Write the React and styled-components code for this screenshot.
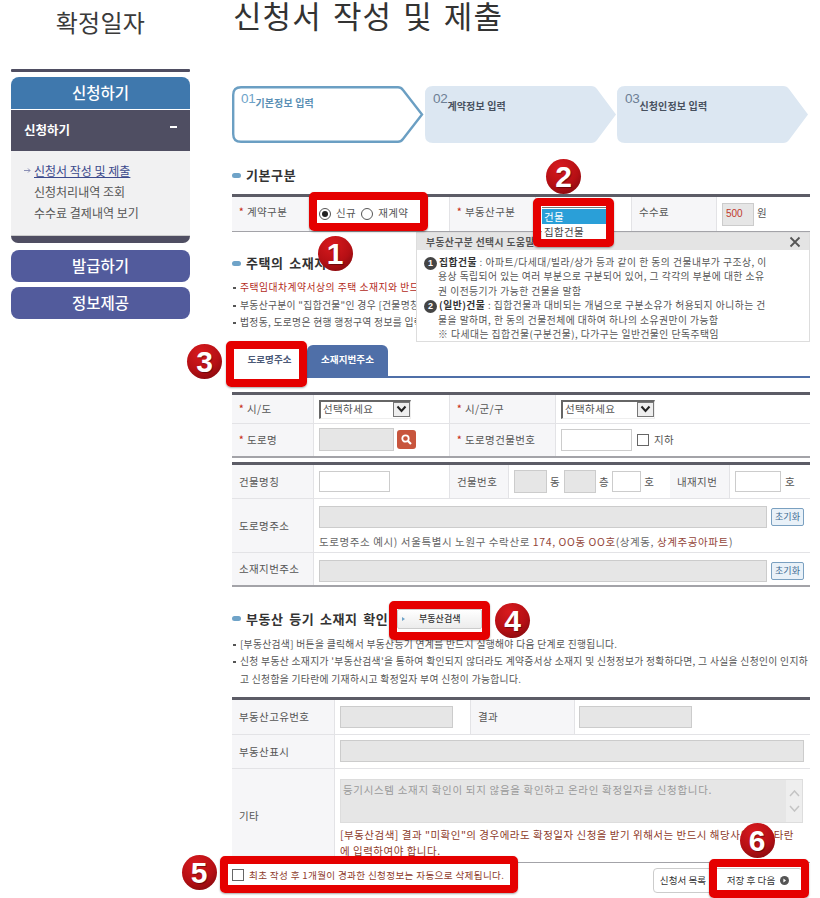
import React from 'react';
import styled, { createGlobalStyle } from 'styled-components';

const Global = createGlobalStyle`
  html, body { margin: 0; padding: 0; background: #fff; }
  body { font-family: "Noto Sans CJK KR", "Liberation Sans", sans-serif; color: #444; overflow: hidden; }
  * { box-sizing: border-box; }
`;

const Page = styled.div`
  position: relative; width: 820px; height: 898px; overflow: hidden; display: flex; background: #fff;
`;
const Side = styled.aside`
  width: 232px; flex: none; padding-left: 11px;
`;
const SideInner = styled.div`width: 179px;`;
const SideTitle = styled.div`
  height: 69px; padding-top: 6px; line-height: 32px; text-align: center; font-size: 24px; color: #3a3a3a; letter-spacing: 0.3px;
`;
const SideRule = styled.div`height: 3px; background: #4f4e62; border-radius: 1px; margin-bottom: 5px;`;
const SideHead = styled.div`
  height: 32px; line-height: 31px; border-radius: ${p => p.$open ? '8px 8px 0 0' : '8px'};
  background: ${p => p.$color}; color: #fff; font-size: 15.5px; font-weight: 500; text-align: center;
  margin-bottom: ${p => p.$mb || 0}px;
`;
const SideSub = styled.div`
  height: 41px; margin-top: 1px; padding: 0 13px 3px 13px; background: #4f4e62; color: #fff; font-size: 12.5px; font-weight: 700;
  display: flex; align-items: center; justify-content: space-between;
`;
const SideMinus = styled.span`width: 7px; height: 2px; background: #fff; margin-bottom: 4px;`;
const SideList = styled.div`
  background: #f1f1f2; height: 85px; padding-top: 9px; border-bottom: 1px solid #ccc;
`;
const SideLink = styled.div`
  height: 21px; line-height: 21px; font-size: 12px; padding-left: 23px; color: ${p => p.$active ? '#3c4a8c' : '#555'}; position: relative;
  span { text-decoration: ${p => p.$active ? 'underline' : 'none'}; }
  svg { position: absolute; left: 13px; top: 8px; }
`;
const SideFoot = styled.div`height: 7px; background: #4f4e62; border-radius: 0 0 8px 8px; margin-bottom: 7px;`;

const Main = styled.main`width: 578px; flex: none;`;
const Title = styled.h1`
  margin: 0; height: 30px; line-height: 30px; font-size: 31px; font-weight: 400; color: #333; letter-spacing: 1.1px; word-spacing: 3px; white-space: nowrap; padding-left: 1px;
`;
const Steps = styled.div`display: flex; margin-top: 56px; height: 57px;`;
const Step = styled.div`
  position: relative; width: ${p => p.$w}px; flex: none; padding: 6px 0 0 9px; display: flex; align-items: flex-start;
  svg { position: absolute; inset: 0; width: 100%; height: 100%; }
`;
const StepNo = styled.span`
  position: relative; font-family: "Liberation Sans", sans-serif; font-size: 13.5px; line-height: 14px; letter-spacing: -0.3px; color: ${p => p.$on ? '#6ea3c9' : '#6d7f95'};
`;
const StepLabel = styled.span`
  position: relative; font-size: 10px; font-weight: 700; margin-top: ${p => p.$on ? 5 : 8}px; line-height: 12px; letter-spacing: 0.15px; color: ${p => p.$on ? '#5a8fb5' : '#47505e'};
`;

const Heading = styled.h2`
  margin: ${p => p.$mt}px 0 0; height: 16px; line-height: 16px; font-size: 13px; font-weight: 700; color: #333;
  display: flex; align-items: center; gap: 5px; letter-spacing: 0.6px; word-spacing: 2px; white-space: nowrap;
  &::before { content: ""; width: 9px; height: 5px; border-radius: 2.5px; background: #6fa3c8; flex: none; }
`;
const Table = styled.div`
  margin-top: ${p => p.$mt}px; border-top: 3px solid #5c5c66; border-bottom: ${p => p.$bw || 1}px solid #a3a3a8;
`;
const Row = styled.div`
  display: grid; grid-template-columns: ${p => p.$cols}; height: ${p => p.$h}px;
  & + & { border-top: 1px solid #e3e3e6; }
`;
const Label = styled.div`
  background: #f6f6f8; display: flex; align-items: center; padding: 0 0 ${p => p.$pb || 0}px 7px; font-size: 10.5px; color: #555; letter-spacing: 0.4px;
  border-right: 1px solid #e3e3e6; white-space: nowrap; ${p => p.$left ? 'border-left: 1px solid #e3e3e6;' : ''}
`;
const Req = styled.i`color: #c8321f; font-style: normal; font-size: 9px; margin-right: 3px; font-weight: 700;`;
const Cell = styled.div`
  position: relative; display: flex; align-items: center; gap: ${p => p.$gap ?? 4}px; padding-left: ${p => p.$pl ?? 5}px; font-size: 10.5px; color: #555; white-space: nowrap; letter-spacing: 0.4px;
`;
const Choice = styled.span`margin-top: -3px;`;
const AddrCell = styled.div`
  padding: 7px 5px 0 5px; font-size: 10.5px; color: #666; letter-spacing: 0.6px; white-space: nowrap;
`;
const AddrLine = styled.div`display: flex; align-items: center; gap: 4px;`;
const AddrHint = styled.div`margin-top: 7px; line-height: 13px; em { color: #94463a; font-style: normal; }`;
const Field = styled.div`
  width: ${p => p.$w}px; height: ${p => p.$h || 22}px; flex: none; border: 1px solid #ccc;
  background: ${p => p.$off ? '#e6e6e6' : '#fff'}; margin-left: ${p => p.$ml || 0}px;
  ${p => p.$red ? 'color:#c0392b; font-family:"Liberation Sans",sans-serif; font-size:10px; line-height:20px; padding-left:3px; letter-spacing:0;' : ''}
`;
const Radio = styled.span`
  width: 12px; height: 12px; border-radius: 50%; border: 1px solid #555; background: #fff; flex: none; display: inline-flex; align-items: center; justify-content: center;
  &::after { content: ""; width: 6px; height: 6px; border-radius: 50%; background: ${p => p.$on ? '#222' : 'transparent'}; }
`;
const Check = styled.span`width: 12px; height: 12px; border: 1px solid #666; background: #fff; flex: none; display: inline-block;`;
const ListBox = styled.div`
  position: absolute; z-index: 3; left: 6px; top: 10px; width: 64px; height: 31px; background: #fff; border-top: 1px solid #777; padding-top: 1px; font-size: 10.5px; color: #444; line-height: 15px; letter-spacing: 0.3px;
`;
const ListItem = styled.div`
  height: 15px; padding-left: 2px; background: ${p => p.$on ? '#2a9fd8' : '#fff'}; color: ${p => p.$on ? '#fff' : '#444'};
`;
const Select = styled.div`
  width: ${p => p.$w}px; height: 19px; margin-top: 1px; border-top: 2px solid #666; border-left: 2px solid #666; border-bottom: 1px solid #eee; border-right: 1px solid #eee; background: #fff; display: flex; justify-content: space-between; font-size: 10.5px; line-height: 13px; color: #555; padding-left: 2px; flex: none;
`;
const SelectBtn = styled.span`
  width: 17px; height: 15px; background: #eee; border: 1px solid #777; display: flex; align-items: center; justify-content: center;
`;
const SearchBtn = styled.span`
  width: 19px; height: 19px; border-radius: 3px; background: #c8553d; display: flex; align-items: center; justify-content: center; flex: none;
`;
const ResetBtn = styled.span`
  width: 33px; height: 18px; border: 1px solid #7aa0c0; border-radius: 2px; background: #e9f1f8; color: #3c6a92; font-size: 9px; line-height: 16px; text-align: center; flex: none; letter-spacing: 0;
`;
const Notes = styled.div`margin-top: ${p => p.$mt}px;`;
const Note = styled.div`
  height: 17.5px; line-height: 17.5px; font-size: 9.8px; color: #555; white-space: nowrap; padding-left: 8px; position: relative; letter-spacing: 0.3px;
  ${p => p.$bullet === false ? '' : `&::before { content: ""; position: absolute; left: 1px; top: 8px; width: 3px; height: 2px; background: #555; }`}
`;
const Alert = styled.span`color: #b32a22; letter-spacing: 0.5px;`;
const Tabs = styled.div`
  margin-top: 14px; height: 32px; display: flex; align-items: flex-end; border-bottom: 2px solid #4f6fa8;
`;
const Tab = styled.div`
  width: ${p => p.$w}px; border-radius: 6px 6px 0 0; background: ${p => p.$on ? '#fff' : '#4f6fa8'}; color: ${p => p.$on ? '#4c5a78' : '#fff'}; font-size: 9.5px; font-weight: 700; text-align: center; line-height: 29px; margin-bottom: ${p => p.$on ? -2 : 0}px; height: ${p => p.$on ? 33 : 31}px; letter-spacing: 0.1px;
`;
const Help = styled.div`
  position: absolute; z-index: 2; left: 416px; top: 232px; width: 394px; height: 110px; background: #fff; border: 1px solid #ddd;
`;
const HelpHead = styled.div`
  height: 17px; background: #e4e4e4; display: flex; align-items: center; justify-content: space-between; padding: 0 8px 0 9px; font-size: 9.8px; font-weight: 700; color: #555; letter-spacing: 0.4px;
`;
const HelpBody = styled.div`padding: 5px 0 0 7px;`;
const HelpLine = styled.div`
  height: 14.4px; line-height: 14.4px; font-size: 9.8px; color: #555; white-space: nowrap; padding-left: ${p => p.$indent ? 14 : 0}px; letter-spacing: 0.47px;
  b { color: #333; font-weight: 700; }
`;
const HelpNum = styled.span`
  display: inline-block; width: 13px; height: 13px; border-radius: 50%; background: #444; color: #fff; font-size: 9px; line-height: 13px; text-align: center; margin-right: 2px; font-family: "Liberation Sans", sans-serif; font-weight: 700; letter-spacing: 0;
`;
const SearchAction = styled.span`
  width: 85px; height: 20px; flex: none; margin-left: 4px; border: 1px solid #ccc; border-radius: 2px; background: linear-gradient(#fff, #ececec); font-size: 9px; font-weight: 500; color: #333; text-align: center; line-height: 18px; letter-spacing: 0; position: relative;
  &::before { content: ""; position: absolute; left: 4px; top: 7px; border-left: 3px solid #6fa3c8; border-top: 2px solid transparent; border-bottom: 2px solid transparent; }
`;
const TextBox = styled.div`
  width: 463px; height: 44px; background: #e6e6e6; border: 1px solid #ddd; display: flex; justify-content: space-between; font-size: 10.5px; color: #9a9a9a; line-height: 13px; padding: 3px 0 0 2px; letter-spacing: 0.68px; white-space: nowrap;
`;
const Scroll = styled.span`
  width: 16px; height: 42px; margin-top: -3px; background: #eee; display: flex; flex-direction: column; align-items: center; justify-content: center; gap: 8px; color: #bbb;
`;
const EtcCell = styled.div`padding: 10px 0 0 5px;`;
const EtcText = styled.div`
  margin-top: 4px; font-size: 10.5px; line-height: 16px; color: #8e3b2a; letter-spacing: 0.5px; white-space: nowrap;
`;
const Footer = styled.div`
  margin-top: 5px; height: 25px; display: flex; align-items: flex-start; justify-content: space-between;
`;
const Agree = styled.div`
  display: flex; align-items: center; gap: 5px; height: 14px; font-size: 9.6px; color: #8e3b2a; white-space: nowrap; letter-spacing: 0.34px;
`;
const Actions = styled.div`display: flex; padding-right: 7px;`;
const FootBtn = styled.span`
  width: ${p => p.$w}px; height: 25px; border: 1px solid #ccc; border-radius: 4px; background: #fff; font-size: 9.6px; line-height: 23px; text-align: center; color: #333; display: flex; align-items: center; justify-content: center; gap: 5px;
`;

const Frame = styled.div`
  position: absolute; z-index: 4; left: ${p => p.$x}px; top: ${p => p.$y}px; width: ${p => p.$w}px; height: ${p => p.$h}px;
  border: 8px solid #e50000; border-radius: 5px; box-shadow: 0 1px 2px rgba(0,0,0,.35);
`;
const Badge = styled.div`
  position: absolute; z-index: 5; left: ${p => p.$x - 17.5}px; top: ${p => p.$y - 17.5}px; width: 35px; height: 35px; border-radius: 50%;
  background: radial-gradient(circle at 40% 25%, #d81a1e 0%, #b50f14 55%, #70080c 100%);
  color: #fff; font-family: "Liberation Sans", sans-serif; font-weight: 700; font-size: 30px; line-height: 35px; text-align: center; text-shadow: 1px 1px 1px rgba(0,0,0,.4);
`;

const StepShape = ({ active, w }) => (
  <svg viewBox={`0 0 ${w} 57`} preserveAspectRatio="none">
    {active
      ? <path d={`M9 1.2H${w - 26}Q${w - 23} 1.2 ${w - 21} 4L${w - 2} 28.5L${w - 21} 53Q${w - 23} 55.8 ${w - 26} 55.8H9Q1.2 55.8 1.2 48V9Q1.2 1.2 9 1.2Z`} fill="#fff" stroke="#6b9fc3" strokeWidth="2.4" />
      : <path d={`M9 0H${w - 25}Q${w - 21} 0 ${w - 19} 3L${w} 28.5L${w - 19} 54Q${w - 21} 57 ${w - 25} 57H9Q1 57 1 49V8Q1 0 9 0Z`} fill="#dce7f2" />}
  </svg>
);
const Chevron = () => (
  <svg width="11" height="8" viewBox="0 0 11 8"><path d="M1.5 1.5L5.5 6L9.5 1.5" fill="none" stroke="#222" strokeWidth="2" /></svg>
);
const Lens = () => (
  <svg width="11" height="11" viewBox="0 0 11 11"><circle cx="4.5" cy="4.5" r="3.2" fill="none" stroke="#fff" strokeWidth="1.8" /><path d="M7 7L10 10" stroke="#fff" strokeWidth="2.2" /></svg>
);
const Close = () => (
  <svg width="12" height="12" viewBox="0 0 12 12"><path d="M1.5 1.5L10.5 10.5M10.5 1.5L1.5 10.5" stroke="#555" strokeWidth="1.8" /></svg>
);
const Caret = ({ up }) => (
  <svg width="11" height="7" viewBox="0 0 11 7"><path d={up ? 'M1 6L5.5 1L10 6' : 'M1 1L5.5 6L10 1'} fill="none" stroke="#c4c4c4" strokeWidth="1.5" /></svg>
);
const LinkArrow = () => (
  <svg width="7" height="5" viewBox="0 0 7 5"><path d="M0 2.5H6M4 .5L6 2.5L4 4.5" fill="none" stroke="#8a8fb5" strokeWidth="1" /></svg>
);
const PlayDot = () => (
  <svg width="9" height="9" viewBox="0 0 9 9"><circle cx="4.5" cy="4.5" r="4.5" fill="#555" /><path d="M3.4 2.6L6 4.5L3.4 6.4Z" fill="#fff" /></svg>
);

const frames = [
  { x: 309, y: 192, w: 119, h: 39 },
  { x: 533, y: 198, w: 81, h: 49 },
  { x: 226, y: 341, w: 81, h: 46 },
  { x: 389, y: 601, w: 101, h: 39 },
  { x: 220, y: 856, w: 298, h: 37 },
  { x: 709, y: 859, w: 100, h: 39 },
];
const badges = [
  { n: 1, x: 335, y: 253 }, { n: 2, x: 563.5, y: 176 }, { n: 3, x: 204.5, y: 361 },
  { n: 4, x: 512.5, y: 620 }, { n: 5, x: 199, y: 872.5 }, { n: 6, x: 757, y: 840 },
];
const T1 = '78px 139px 87px 95px 86px 93px';
const T2 = '82px 135px 107px 254px';
const T3 = '82px 135px 60px 161px 60px 80px';
const T3B = '82px 496px';
const T4 = '103px 135px 105px 235px';
const T4B = '103px 475px';

export default function App() {
  return (
    <Page>
      <Global />
      <Side>
        <SideInner>
          <SideTitle>확정일자</SideTitle>
          <SideRule />
          <SideHead $color="#3f78ad" $open>신청하기</SideHead>
          <SideSub>신청하기<SideMinus /></SideSub>
          <SideList>
            <SideLink $active><LinkArrow /><span>신청서 작성 및 제출</span></SideLink>
            <SideLink>신청처리내역 조회</SideLink>
            <SideLink>수수료 결제내역 보기</SideLink>
          </SideList>
          <SideFoot />
          <SideHead $color="#525b9c" $mb={5}>발급하기</SideHead>
          <SideHead $color="#525b9c">정보제공</SideHead>
        </SideInner>
      </Side>
      <Main>
        <Title>신청서 작성 및 제출</Title>
        <Steps>
          <Step $w={192}><StepShape active w={192} /><StepNo $on>01</StepNo><StepLabel $on>기본정보 입력</StepLabel></Step>
          <Step $w={192}><StepShape w={192} /><StepNo>02</StepNo><StepLabel>계약정보 입력</StepLabel></Step>
          <Step $w={192}><StepShape w={192} /><StepNo>03</StepNo><StepLabel>신청인정보 입력</StepLabel></Step>
        </Steps>

        <Heading $mt={24}>기본구분</Heading>
        <Table $mt={11}>
          <Row $cols={T1} $h={34}>
            <Label $pb={5}><Req>*</Req>계약구분</Label>
            <Cell $pl={9} $gap={5}><Radio $on /><Choice>신규</Choice><Radio /><Choice>재계약</Choice></Cell>
            <Label $left $pb={5}><Req>*</Req>부동산구분</Label>
            <Cell><ListBox><ListItem $on>건물</ListItem><ListItem>집합건물</ListItem></ListBox></Cell>
            <Label $left $pb={5}>수수료</Label>
            <Cell $gap={3}><Field $w={32} $h={23} $off $red>500</Field><Choice>원</Choice></Cell>
          </Row>
        </Table>

        <Heading $mt={23}>주택의 소재지</Heading>
        <Notes $mt={8}>
          <Note><Alert>주택임대차계약서상의 주택 소재지와 반드시 일치하여야 합니다.</Alert></Note>
          <Note>부동산구분이 "집합건물"인 경우 [건물명칭] 항목을 입력하여 주시기 바랍니다.</Note>
          <Note>법정동, 도로명은 현행 행정구역 정보를 입력하여 주시기 바랍니다.</Note>
        </Notes>

        <Tabs>
          <Tab $w={75} $on>도로명주소</Tab>
          <Tab $w={81}>소재지번주소</Tab>
        </Tabs>

        <Table $mt={14} $bw={2}>
          <Row $cols={T2} $h={28}>
            <Label><Req>*</Req>시/도</Label>
            <Cell><Select $w={92}>선택하세요<SelectBtn><Chevron /></SelectBtn></Select></Cell>
            <Label $left><Req>*</Req>시/군/구</Label>
            <Cell><Select $w={94}>선택하세요<SelectBtn><Chevron /></SelectBtn></Select></Cell>
          </Row>
          <Row $cols={T2} $h={33}>
            <Label><Req>*</Req>도로명</Label>
            <Cell $gap={3}><Field $w={75} $h={23} $off /><SearchBtn><Lens /></SearchBtn></Cell>
            <Label $left><Req>*</Req>도로명건물번호</Label>
            <Cell $gap={5}><Field $w={71} $h={22} /><Check />지하</Cell>
          </Row>
        </Table>

        <Table $mt={4} $bw={2}>
          <Row $cols={T3} $h={33}>
            <Label>건물명칭</Label>
            <Cell><Field $w={71} $h={21} /></Cell>
            <Label $left>건물번호</Label>
            <Cell $gap={3}><Field $w={33} $h={23} $off />동<Field $w={32} $h={23} $off $ml={1} />층<Field $w={29} $h={21} />호</Cell>
            <Label>내재지번</Label>
            <Cell $gap={4}><Field $w={46} $h={21} />호</Cell>
          </Row>
          <Row $cols={T3B} $h={54}>
            <Label>도로명주소</Label>
            <AddrCell>
              <AddrLine><Field $w={448} $off /><ResetBtn>초기화</ResetBtn></AddrLine>
              <AddrHint>도로명주소 예시) 서울특별시 노원구 수락산로 <em>174, OO동 OO호</em>(상계동, <em>상계주공아파트</em>)</AddrHint>
            </AddrCell>
          </Row>
          <Row $cols={T3B} $h={33}>
            <Label>소재지번주소</Label>
            <AddrCell>
              <AddrLine><Field $w={448} $off /><ResetBtn>초기화</ResetBtn></AddrLine>
            </AddrCell>
          </Row>
        </Table>

        <Heading $mt={24}>부동산 등기 소재지 확인 <SearchAction>부동산검색</SearchAction></Heading>
        <Notes $mt={9}>
          <Note>[부동산검색] 버튼을 클릭해서 부동산등기 연계를 반드시 실행해야 다음 단계로 진행됩니다.</Note>
          <Note>신청 부동산 소재지가 '부동산검색'을 통하여 확인되지 않더라도 계약증서상 소재지 및 신청정보가 정확하다면, 그 사실을 신청인이 인지하</Note>
          <Note $bullet={false}>고 신청함을 기타란에 기재하시고 확정일자 부여 신청이 가능합니다.</Note>
        </Notes>

        <Table $mt={8.5} $bw={1}>
          <Row $cols={T4} $h={34}>
            <Label>부동산고유번호</Label>
            <Cell><Field $w={113} $h={22} $off /></Cell>
            <Label $left>결과</Label>
            <Cell $pl={4}><Field $w={113} $h={22} $off /></Cell>
          </Row>
          <Row $cols={T4B} $h={34}>
            <Label>부동산표시</Label>
            <Cell><Field $w={464} $h={22} $off /></Cell>
          </Row>
          <Row $cols={T4B} $h={94}>
            <Label>기타</Label>
            <EtcCell>
              <TextBox>등기시스템 소재지 확인이 되지 않음을 확인하고 온라인 확정일자를 신청합니다.<Scroll><Caret up /><Caret /></Scroll></TextBox>
              <EtcText>[부동산검색] 결과 "미확인"의 경우에라도 확정일자 신청을 받기 위해서는 반드시 해당사유를 기타란<br />에 입력하여야 합니다.</EtcText>
            </EtcCell>
          </Row>
        </Table>

        <Footer>
          <Agree><Check />최초 작성 후 1개월이 경과한 신청정보는 자동으로 삭제됩니다.</Agree>
          <Actions>
            <FootBtn $w={60}>신청서 목록</FootBtn>
            <FootBtn $w={90}>저장 후 다음 <PlayDot /></FootBtn>
          </Actions>
        </Footer>
      </Main>

      <Help>
        <HelpHead>부동산구분 선택시 도움말<Close /></HelpHead>
        <HelpBody>
          <HelpLine><HelpNum>1</HelpNum><b>집합건물</b> : 아파트/다세대/빌라/상가 등과 같이 한 동의 건물내부가 구조상, 이</HelpLine>
          <HelpLine $indent>용상 독립되어 있는 여러 부분으로 구분되어 있어, 그 각각의 부분에 대한 소유</HelpLine>
          <HelpLine $indent>권 이전등기가 가능한 건물을 말함</HelpLine>
          <HelpLine><HelpNum>2</HelpNum><b>(일반)건물</b> : 집합건물과 대비되는 개념으로 구분소유가 허용되지 아니하는 건</HelpLine>
          <HelpLine $indent>물을 말하며, 한 동의 건물전체에 대하여 하나의 소유권만이 가능함</HelpLine>
          <HelpLine $indent>※ 다세대는 집합건물(구분건물), 다가구는 일반건물인 단독주택임</HelpLine>
        </HelpBody>
      </Help>

      {frames.map((f, i) => <Frame key={i} $x={f.x} $y={f.y} $w={f.w} $h={f.h} />)}
      {badges.map(b => <Badge key={b.n} $x={b.x} $y={b.y}>{b.n}</Badge>)}
    </Page>
  );
}
